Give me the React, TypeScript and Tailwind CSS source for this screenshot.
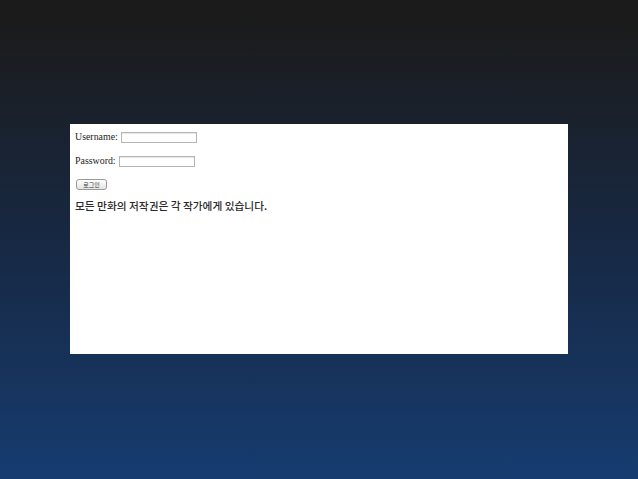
export default function App() {
  return (
    <div className="flex h-[479px] w-full items-center justify-center bg-gradient-to-b from-[#1b1b1b] from-[4%] via-[#172843] via-[50%] to-[#153c70]">
      <div className="mb-[1px] flex h-[230px] w-[498px] flex-col bg-white pl-[5px] pt-[7px] font-['Liberation_Serif','Noto_Sans_CJK_KR',serif] text-[9.9px] text-[#1e1e1e]">
        <div className="flex h-[12px] items-center">
          <span className="leading-none">Username:</span>
          <input
            type="text"
            className="ml-[3px] h-[11px] w-[76px] border border-[#b5b5b5] bg-white shadow-[inset_0_1px_1px_rgba(0,0,0,0.1)] outline-none"
          />
        </div>
        <div className="mt-[12px] flex h-[12px] items-center">
          <span className="leading-none">Password:</span>
          <input
            type="password"
            className="ml-[3px] h-[11px] w-[76px] border border-[#b5b5b5] bg-white shadow-[inset_0_1px_1px_rgba(0,0,0,0.1)] outline-none"
          />
        </div>
        <div className="mt-[12px] flex">
          <button className="ml-[1px] flex h-[11px] w-[31px] items-center justify-center rounded-[3px] border border-[#9a9a9a] bg-gradient-to-b from-white to-[#e4e4e4] font-['Noto_Sans_CJK_KR',sans-serif] text-[6px] leading-none text-[#333]">
            로그인
          </button>
        </div>
        <p className="mt-[9px] font-['Noto_Sans_CJK_KR',sans-serif] text-[10.7px] font-medium leading-[14px] text-[#2a2a2a]">
          모든 만화의 저작권은 각 작가에게 있습니다.
        </p>
      </div>
    </div>
  );
}
